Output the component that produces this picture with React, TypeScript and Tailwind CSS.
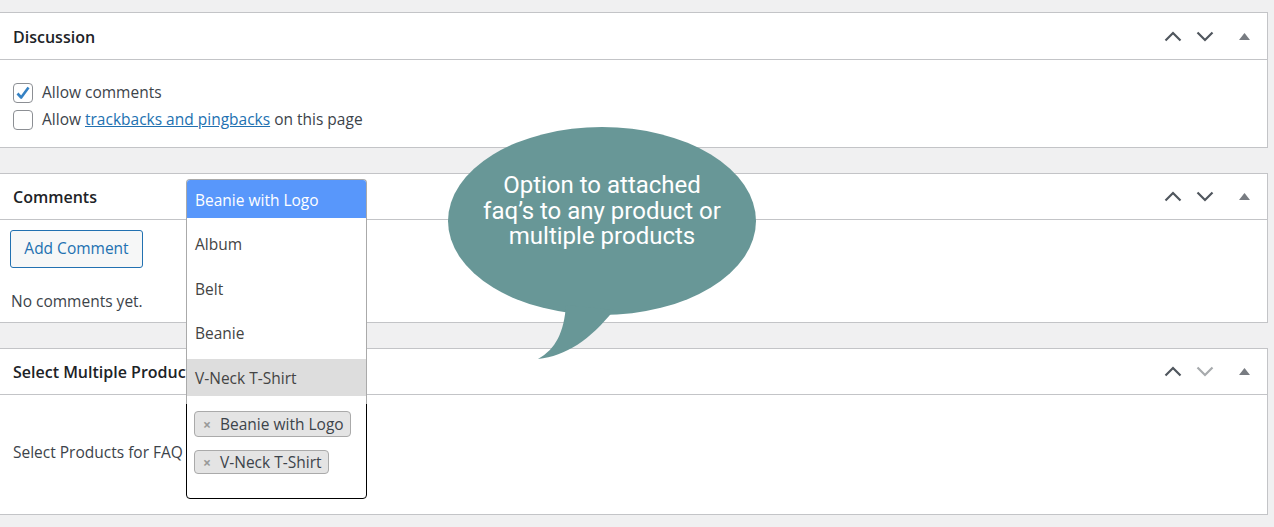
import React from "react";

const font = { fontFamily: '"Open Sans", "Noto Sans", Arial, sans-serif' };

function Controls({ downDisabled = false }: { downDisabled?: boolean }) {
  return (
    <div className="flex items-center h-full">
      <svg width="18" height="11" viewBox="0 0 18 11" className="mr-[14px]">
        <path d="M1.5 9.5 L9 2 L16.5 9.5" fill="none" stroke="#50575e" strokeWidth="2.2" />
      </svg>
      <svg width="18" height="11" viewBox="0 0 18 11" className="mr-[25px]">
        <path d="M1.5 1.5 L9 9 L16.5 1.5" fill="none" stroke={downDisabled ? "#a7aaad" : "#50575e"} strokeWidth="2.2" />
      </svg>
      <svg width="11" height="7" viewBox="0 0 11 7" className="mr-[17px]">
        <path d="M0 7 L5.5 0 L11 7 Z" fill="#787c82" />
      </svg>
    </div>
  );
}

function Panel({
  title,
  children,
  bodyClass,
  headerClass,
  downDisabled,
}: {
  title: string;
  children: React.ReactNode;
  bodyClass: string;
  headerClass: string;
  downDisabled?: boolean;
}) {
  return (
    <div className="w-[1268px] bg-white border-y border-r border-[#c3c4c7]">
      <div className={headerClass + " border-b border-[#c3c4c7] flex items-center justify-between"}>
        <div className="pl-[13px] pt-[1px] text-[16px] font-semibold text-[#1d2327] whitespace-nowrap">{title}</div>
        <Controls downDisabled={downDisabled} />
      </div>
      <div className={bodyClass}>{children}</div>
    </div>
  );
}

function Checkbox({ checked }: { checked?: boolean }) {
  return (
    <div className="w-[20px] h-[20px] rounded-[4px] border border-[#8c8f94] bg-white flex items-center justify-center shrink-0">
      {checked && (
        <svg width="16" height="16" viewBox="0 0 16 16">
          <path d="M2.5 8.5 L6.2 12.5 L13.5 2.5" fill="none" stroke="#3582c4" strokeWidth="2.6" strokeLinejoin="round" />
        </svg>
      )}
    </div>
  );
}

export default function App() {
  return (
    <div className="relative w-[1274px] h-[527px] bg-[#f0f0f1] overflow-hidden pt-[12px] text-[#3c434a]" style={font}>
      <div className="flex flex-col gap-[25px]">
        <Panel
          title="Discussion"
          headerClass="h-[47px]"
          bodyClass="h-[87px] pt-[23px] pl-[13px] flex flex-col gap-[7px] text-[15.5px]"
        >
          <div className="flex items-center gap-[9px] h-[20px]">
            <Checkbox checked />
            <span>Allow comments</span>
          </div>
          <div className="flex items-center gap-[9px] h-[20px]">
            <Checkbox />
            <span>
              Allow <span className="text-[#2271b1] underline">trackbacks and pingbacks</span> on this page
            </span>
          </div>
        </Panel>

        <Panel title="Comments" headerClass="h-[46px]" bodyClass="h-[102px] pt-[10px] pl-[10px] text-[15.5px]">
          <div className="w-[133px] h-[38px] rounded-[3px] border border-[#2271b1] bg-[#f6f7f7] text-[#2271b1] flex items-center justify-center">
            Add Comment
          </div>
          <div className="mt-[22px] pl-[1px]">No comments yet.</div>
        </Panel>

        <Panel
          title="Select Multiple Products"
          headerClass="h-[46px]"
          bodyClass="h-[119px] pt-[8px] flex text-[15.5px]"
          downDisabled
        >
          <div className="w-[186px] pl-[13px] flex items-center pb-[12px] whitespace-nowrap">Select Products for FAQ</div>
          <div className="w-[181px] h-[96px] border border-black rounded-b-[4px] pt-[7px] pl-[7px] flex flex-col gap-[13px] items-start">
            <div className="h-[26px] pl-[8px] pr-[6px] pt-[1px] rounded-[4px] border border-[#aaa] bg-[#e4e4e4] flex items-center gap-[9px]">
              <span className="text-[#999] text-[14px] font-bold leading-none">×</span>
              <span>Beanie with Logo</span>
            </div>
            <div className="h-[24px] pl-[8px] pr-[6px] pt-[1px] rounded-[4px] border border-[#aaa] bg-[#e4e4e4] flex items-center gap-[9px]">
              <span className="text-[#999] text-[14px] font-bold leading-none">×</span>
              <span>V-Neck T-Shirt</span>
            </div>
          </div>
        </Panel>
      </div>

      {/* dropdown list */}
      <div className="absolute left-[186px] top-[179px] w-[181px] h-[225px] bg-white border-x border-t border-[#aaa] rounded-t-[4px] text-[15.5px] text-[#444] overflow-hidden">
        <div className="h-[38px] bg-[#5897fb] text-white flex items-center pl-[8px] pt-[3px]">Beanie with Logo</div>
        <div className="h-[38px] mt-[7px] flex items-center pl-[8px] pt-[2px]">Album</div>
        <div className="h-[38px] mt-[7px] flex items-center pl-[8px] pt-[2px]">Belt</div>
        <div className="h-[38px] mt-[6px] flex items-center pl-[8px] pt-[2px]">Beanie</div>
        <div className="h-[37px] mt-[7px] bg-[#ddd] flex items-center pl-[8px] pt-[3px]">V-Neck T-Shirt</div>
      </div>

      {/* speech bubble */}
      <svg className="absolute left-0 top-0" width="1274" height="527" viewBox="0 0 1274 527">
        <ellipse cx="602" cy="221" rx="154" ry="94" fill="#689797" />
        <path d="M566 305 C564 332 556 349 538 359 C566 356 590 340 614 310 Z" fill="#689797" />
      </svg>
      <div
        className="absolute left-[442px] top-[173px] w-[320px] text-center text-white text-[24px] leading-[25.5px]"
        style={{ fontFamily: 'Roboto, "Noto Sans", sans-serif' }}
      >
        Option to attached
        <br />
        faq’s to any product or
        <br />
        multiple products
      </div>
    </div>
  );
}
